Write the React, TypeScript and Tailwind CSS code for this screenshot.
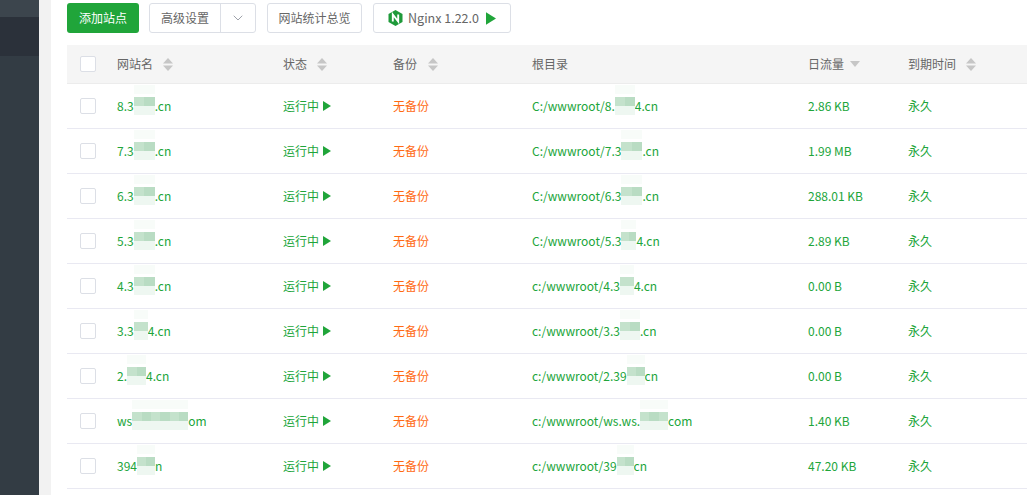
import { ChevronDown } from 'lucide-react';

type Site = {
  name: [string, number, string];
  root: [string, number, string];
  flow: string;
};

const sites: Site[] = [
  { name: ['8.3', 21, '.cn'], root: ['C:/wwwroot/8.', 20, '4.cn'], flow: '2.86 KB' },
  { name: ['7.3', 21, '.cn'], root: ['C:/wwwroot/7.3', 21, '.cn'], flow: '1.99 MB' },
  { name: ['6.3', 21, '.cn'], root: ['C:/wwwroot/6.3', 21, '.cn'], flow: '288.01 KB' },
  { name: ['5.3', 21, '.cn'], root: ['C:/wwwroot/5.3', 15, '4.cn'], flow: '2.89 KB' },
  { name: ['4.3', 21, '.cn'], root: ['c:/wwwroot/4.3', 14, '4.cn'], flow: '0.00 B' },
  { name: ['3.3', 14, '4.cn'], root: ['c:/wwwroot/3.3', 20, '.cn'], flow: '0.00 B' },
  { name: ['2.', 19, '4.cn'], root: ['c:/wwwroot/2.39', 18, 'cn'], flow: '0.00 B' },
  { name: ['ws', 56, 'om'], root: ['c:/wwwroot/ws.ws.', 28, 'com'], flow: '1.40 KB' },
  { name: ['394', 18, 'n'], root: ['c:/wwwroot/39', 17, 'cn'], flow: '47.20 KB' },
];

// pixelated blur that hides part of the domain
function Mosaic({ width }: { width: number }) {
  const cells = Math.max(1, Math.round(width / 10));
  return (
    <span className="relative inline-block h-3 align-middle" style={{ width }}>
      <span className="absolute left-0 right-0 top-[-17px] h-[9px] bg-[#f8fcf9]" />
      <span className="absolute left-0 right-0 top-[-5px] flex h-[9px]">
        {Array.from({ length: cells }).map((_, i) => (
          <span key={i} className={i % 2 === 0 ? 'flex-1 bg-[#c4e2cc]' : 'flex-1 bg-[#b9dcc3]'} />
        ))}
      </span>
      <span className="absolute left-0 right-0 top-[4px] h-[9px] bg-[#eef7f1]" />
    </span>
  );
}

function SortIcon() {
  return (
    <svg width="10" height="13" viewBox="0 0 10 13" className="shrink-0">
      <path d="M5 0 L10 5.5 H0 Z" fill="#c6c6c6" />
      <path d="M5 13 L10 7.5 H0 Z" fill="#c6c6c6" />
    </svg>
  );
}

function PlayIcon({ className }: { className: string }) {
  return (
    <svg viewBox="0 0 8 10" className={className}>
      <path d="M0 0 L8 5 L0 10 Z" fill="#20a53a" />
    </svg>
  );
}

function NginxIcon() {
  return (
    <svg width="15" height="16" viewBox="0 0 15 16" className="shrink-0">
      <path d="M7.5 0 L14.5 4 V12 L7.5 16 L0.5 12 V4 Z" fill="#1f9a3a" />
      <path d="M4.8 11.5 V4.5 L10.2 11.5 V4.5" fill="none" stroke="#ffffff" strokeWidth="1.9" />
    </svg>
  );
}

function Checkbox() {
  return <div className="h-4 w-4 rounded-[2px] border border-[#dcdfe6] bg-white" />;
}

const gridCols = 'grid grid-cols-[50px_166px_110px_139px_276px_100px_1fr] items-center';

export default function App() {
  return (
    <div
      className="flex h-[495px] w-[1027px] overflow-hidden bg-white text-xs"
      style={{ fontFamily: '"Noto Sans CJK SC", "Open Sans", sans-serif' }}
    >
      <aside className="w-[39px] shrink-0 bg-[#333c44]">
        <div className="h-[17px] bg-[#3c454d]" />
        <div className="h-[39px] bg-[#2b313a]" />
      </aside>
      <div className="w-3 shrink-0 bg-[#f2f2f2]" />

      <main className="min-w-0 flex-1 pl-4">
        <div className="flex h-[45px] items-start pt-[3px]">
          <button className="h-[30px] w-[72px] rounded-[3px] bg-[#20a53a] text-white">添加站点</button>
          <div className="ml-[10px] flex h-[30px] w-[107px] rounded-[3px] border border-[#dcdfe6] text-[#666666]">
            <span className="flex w-[71px] items-center justify-center border-r border-[#dcdfe6]">高级设置</span>
            <span className="flex flex-1 items-center justify-center">
              <ChevronDown className="h-4 w-4 text-[#8a8f99]" strokeWidth={1.25} />
            </span>
          </div>
          <button className="ml-[11px] h-[30px] w-[95px] rounded-[3px] border border-[#dcdfe6] text-[#666666]">网站统计总览</button>
          <button className="ml-[11px] flex h-[30px] w-[138px] items-center justify-center gap-[5px] rounded-[3px] border border-[#dcdfe6] text-[12.5px] text-[#666666]">
            <NginxIcon />
            <span>Nginx 1.22.0</span>
            <PlayIcon className="ml-[2px] h-[13px] w-[10px]" />
          </button>
        </div>

        <div className={`${gridCols} h-[39px] border-b border-[#ececec] bg-[#f5f5f5] text-[#666666]`}>
          <div className="pl-[13px]"><Checkbox /></div>
          <div className="flex items-center gap-[10px]">网站名<SortIcon /></div>
          <div className="flex items-center gap-[10px]">状态<SortIcon /></div>
          <div className="flex items-center gap-[11px]">备份<SortIcon /></div>
          <div>根目录</div>
          <div className="flex items-center gap-[6px]">
            日流量
            <svg width="10" height="6" viewBox="0 0 10 6"><path d="M0 0 H10 L5 6 Z" fill="#c6c6c6" /></svg>
          </div>
          <div className="flex items-center gap-[10px]">到期时间<SortIcon /></div>
        </div>

        {sites.map((site) => (
          <div key={site.flow + site.name[0]} className={`${gridCols} h-[45px] border-b border-[#e9e9f2] text-[#20a53a]`}>
            <div className="pl-[13px]"><Checkbox /></div>
            <div className="whitespace-nowrap">
              {site.name[0]}<Mosaic width={site.name[1]} />{site.name[2]}
            </div>
            <div className="flex items-center gap-[4px]">
              运行中<PlayIcon className="h-[10px] w-2" />
            </div>
            <div className="text-[#ff6a13]">无备份</div>
            <div className="whitespace-nowrap">
              {site.root[0]}<Mosaic width={site.root[1]} />{site.root[2]}
            </div>
            <div>{site.flow}</div>
            <div>永久</div>
          </div>
        ))}
      </main>
    </div>
  );
}
